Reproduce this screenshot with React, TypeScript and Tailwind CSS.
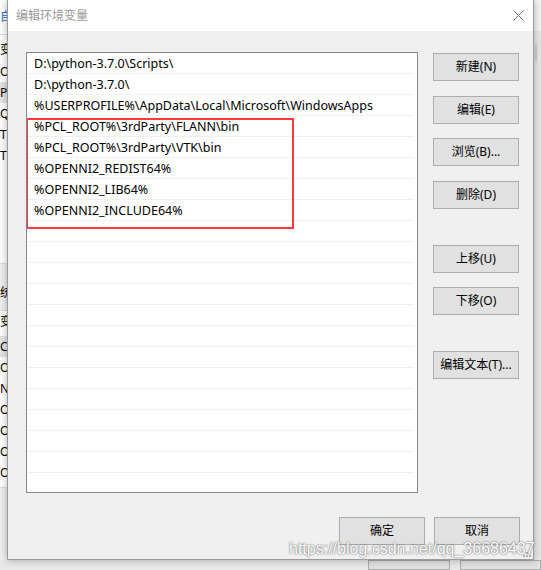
import React from 'react'

const paths = [
    'D:\\python-3.7.0\\Scripts\\',
    'D:\\python-3.7.0\\',
    '%USERPROFILE%\\AppData\\Local\\Microsoft\\WindowsApps',
    '%PCL_ROOT%\\3rdParty\\FLANN\\bin',
    '%PCL_ROOT%\\3rdParty\\VTK\\bin',
    '%OPENNI2_REDIST64%',
    '%OPENNI2_LIB64%',
    '%OPENNI2_INCLUDE64%',
]

// the list box shows 21 rows, the rest are empty
const rows = [...paths, ...Array(13).fill('')]

const font = "font-['Noto_Sans','Noto_Sans_CJK_SC',sans-serif]"

const Btn = ({label, className = ''}: { label: string, className?: string }) => (
    <button
        type="button"
        className={`w-[86px] h-[28px] bg-[#e1e1e1] border border-[#adadad] text-[12px] text-black leading-none ${className}`}
    >
        {label}
    </button>
)

const App = () => {
    return (
        <div className={`w-[541px] h-[570px] overflow-hidden bg-[#f0f0f0] flex flex-col ${font}`}>
            <div className="flex h-[563px]">
                {/* window behind, left edge */}
                <div className="w-[7px] shrink-0 overflow-hidden bg-[#f0f0f0] flex flex-col text-[12px] text-black">
                    <div className="h-[35px] bg-white border-b border-[#d9d9d9] flex items-center text-[#2a6fd6] whitespace-nowrap">自</div>
                    <div className="bg-white h-[228px] flex flex-col whitespace-nowrap">
                        <div className="h-[24px] flex items-end">变量</div>
                        <div className="h-[21px] flex items-center mt-[2px]">OneDrive</div>
                        <div className="h-[21px] flex items-center bg-[#e5e5e5]">Path</div>
                        <div className="h-[21px] flex items-center">QtMsBuild</div>
                        <div className="h-[21px] flex items-center">TEMP</div>
                        <div className="h-[21px] flex items-center">TMP</div>
                    </div>
                    <div className="h-[47px] border-t border-[#d9d9d9] flex items-end pb-[8px] whitespace-nowrap">统</div>
                    <div className="bg-white h-[177px] border-t border-[#d9d9d9] flex flex-col whitespace-nowrap">
                        <div className="h-[21px] flex items-center">变量</div>
                        <div className="h-[21px] flex items-center bg-[#e5e5e5] mt-[4px]">ComSpec</div>
                        <div className="h-[21px] flex items-center">OneDrive</div>
                        <div className="h-[21px] flex items-center">NUMBER</div>
                        <div className="h-[21px] flex items-center">OPENNI2</div>
                        <div className="h-[21px] flex items-center">OPENNI2</div>
                        <div className="h-[21px] flex items-center">OPENNI2</div>
                        <div className="h-[21px] flex items-center">OS</div>
                    </div>
                    <div className="h-[60px] border-t border-[#d9d9d9]"></div>
                </div>

                {/* dialog */}
                <div className="relative w-[527px] shrink-0 flex flex-col border-x border-b border-[#9a9a9a] shadow-[0_0_8px_rgba(0,0,0,0.3)]">
                    <div className="h-[31px] bg-white flex items-center justify-between pl-[8px] pr-[9px]">
                        <span className="text-[12px] text-[#999999]">编辑环境变量</span>
                        <svg width="11" height="11" viewBox="0 0 11 11" className="text-[#707070]">
                            <path d="M0.5 0.5 L10.5 10.5 M10.5 0.5 L0.5 10.5" stroke="currentColor" strokeWidth="1"/>
                        </svg>
                    </div>
                    <div className="flex-1 bg-[#f0f0f0] flex flex-col pl-[18px] pt-[21px]">
                        <div className="flex gap-[15px]">
                            <div className="relative w-[392px] h-[441px] border border-[#828790] bg-white overflow-hidden">
                                {rows.map((p, i) => (
                                    <div key={i} className="h-[21px] mr-[3px] border-b border-[#f0f0f0] pl-[7px] pt-[2px] flex items-center text-[12.5px] text-black whitespace-nowrap">
                                        {p}
                                    </div>
                                ))}
                                <div className="absolute left-[-1px] top-[65px] w-[268px] h-[111px] border-2 border-[#ff3b3b]"></div>
                            </div>
                            <div className="flex flex-col pt-[1px]">
                                <Btn label="新建(N)"/>
                                <Btn label="编辑(E)" className="mt-[15px]"/>
                                <Btn label="浏览(B)..." className="mt-[14px]"/>
                                <Btn label="删除(D)" className="mt-[15px]"/>
                                <Btn label="上移(U)" className="mt-[36px]"/>
                                <Btn label="下移(O)" className="mt-[14px]"/>
                                <Btn label="编辑文本(T)..." className="mt-[36px]"/>
                            </div>
                        </div>
                        <div className="flex justify-end gap-[9px] pr-[13px] mt-[24px]">
                            <Btn label="确定" className="w-[86px]"/>
                            <Btn label="取消"/>
                        </div>
                    </div>
                    {/* resize grip */}
                    <svg width="10" height="10" viewBox="0 0 10 10" className="absolute right-[1px] bottom-[1px]">
                        <rect x="7" y="1" width="2" height="2" fill="#b0b0b0"/>
                        <rect x="4" y="4" width="2" height="2" fill="#b0b0b0"/>
                        <rect x="7" y="4" width="2" height="2" fill="#b0b0b0"/>
                        <rect x="1" y="7" width="2" height="2" fill="#b0b0b0"/>
                        <rect x="4" y="7" width="2" height="2" fill="#b0b0b0"/>
                        <rect x="7" y="7" width="2" height="2" fill="#b0b0b0"/>
                    </svg>
                    <span className="absolute left-[281px] bottom-[2px] text-[16px] font-['Liberation_Sans',sans-serif] text-white leading-none [text-shadow:0_0_2px_#666,0_0_1px_#888]">
                        https://blog.csdn.net/qq_36686437
                    </span>
                </div>

                {/* window behind, right edge */}
                <div className="flex-1 bg-[#e8e8e8] flex flex-col">
                    <div className="h-[31px] bg-[#f5f5f5]"></div>
                    <div className="ml-[1px] mt-[14px] w-[2px] h-[16px] bg-[#cfcfcf]"></div>
                </div>
            </div>
            <div className="flex-1 bg-[#e9e9e9] flex pl-[368px] gap-[10px]">
                <div className="w-[86px] h-[10px] border border-[#adadad] bg-[#e1e1e1]"></div>
                <div className="w-[86px] h-[10px] border border-[#adadad] bg-[#e1e1e1]"></div>
            </div>
        </div>
    )
}

export default App
